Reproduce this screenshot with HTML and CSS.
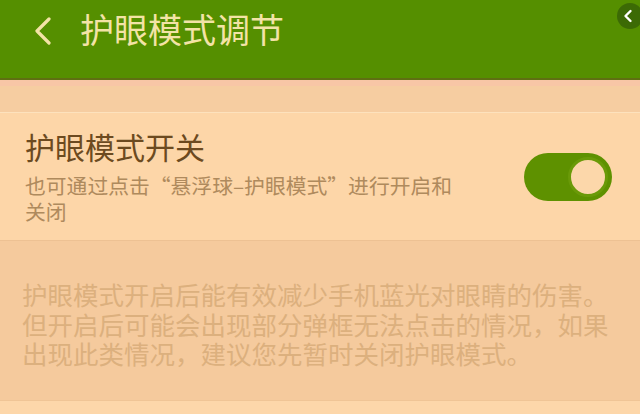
FILE: index.html
```html
<!DOCTYPE html>
<html lang="zh-CN">
<head>
<meta charset="utf-8">
<title>护眼模式调节</title>
<link rel="stylesheet" href="styles.css">
</head>
<body>
<div class="page">
  <header class="topbar">
    <svg class="back" width="18" height="28" viewBox="0 0 18 28"><path d="M15 2 L3 14 L15 26" fill="none" stroke="#f3e3a6" stroke-width="3.2" stroke-linecap="round" stroke-linejoin="round"/></svg>
    <h1 class="title">护眼模式调节</h1>
    <div class="float-ball"><svg width="10" height="14" viewBox="0 0 10 14"><path d="M7.5 2 L2.5 7 L7.5 12" fill="none" stroke="#ffffff" stroke-width="2.4" stroke-linecap="round" stroke-linejoin="round"/></svg></div>
  </header>
  <div class="strip"></div>
  <div class="band"></div>
  <section class="card">
    <div class="card-text">
      <div class="card-title">护眼模式开关</div>
      <div class="card-sub">也可通过点击“悬浮球–护眼模式”进行开启和关闭</div>
    </div>
    <div class="toggle"><div class="knob"></div></div>
  </section>
  <section class="note">
    <p class="note-text">护眼模式开启后能有效减少手机蓝光对眼睛的伤害。但开启后可能会出现部分弹框无法点击的情况，如果出现此类情况，建议您先暂时关闭护眼模式。</p>
  </section>
  <div class="foot"></div>
</div>
</body>
</html>
```
FILE: styles.css
```css
html, body {
  margin: 0;
  padding: 0;
  background: #fdd7aa;
}
body {
  width: 640px;
  height: 414px;
  overflow: hidden;
  font-family: "Noto Sans CJK SC", "Noto Sans", sans-serif;
}
.page {
  display: flex;
  flex-direction: column;
}
.topbar {
  position: relative;
  height: 78px;
  background: #558f00;
  border-bottom: 2px solid #5f6f12;
  display: flex;
  align-items: flex-start;
  padding-left: 34px;
  box-sizing: content-box;
}
.back {
  display: block;
  margin-top: 17px;
}
.title {
  margin: 9px 0 0 28px;
  font-size: 34px;
  font-weight: 400;
  color: #f3e3a6;
  line-height: 40px;
}
.float-ball {
  position: absolute;
  right: -3px;
  top: 3px;
  width: 26px;
  height: 26px;
  border-radius: 50%;
  background: #3c6a05;
  display: flex;
  align-items: center;
  justify-content: center;
}
.float-ball svg {
  margin-left: -4px;
}
.strip {
  height: 6px;
  background: #f8c6a6;
}
.band {
  height: 26px;
  background: #f6cda1;
}
.card {
  border-top: 1px solid #fde2bd;
  border-bottom: 1px solid #edc193;
  background: #fdd6a8;
  height: 129px;
  box-sizing: border-box;
  display: flex;
  align-items: center;
  padding: 0 28px 0 25px;
}
.card-text {
  width: 436px;
  margin-right: 63px;
  padding-bottom: 2px;
}
.card-title {
  font-size: 30px;
  line-height: 36px;
  color: #6c4a20;
}
.card-sub {
  margin-top: 8px;
  font-size: 20.8px;
  line-height: 26px;
  color: #af8a5d;
}
.toggle {
  width: 88px;
  height: 48px;
  border-radius: 24px;
  background: #5e9100;
  display: flex;
  align-items: center;
  justify-content: flex-end;
  padding-right: 4px;
  box-sizing: border-box;
  flex: none;
}
.knob {
  width: 40px;
  height: 40px;
  border-radius: 50%;
  background: #fcd7aa;
  border: 3px solid #6a9a08;
  box-sizing: border-box;
}
.note {
  height: 160px;
  background: #f5ca9d;
  border-bottom: 1px solid #f0c596;
  box-sizing: border-box;
  padding: 38px 22px 0 22px;
}
.note-text {
  margin: 0;
  font-size: 25.5px;
  line-height: 29.5px;
  color: #dcb07e;
}
.foot {
  height: 11px;
  background: #fdd7aa;
}
```
